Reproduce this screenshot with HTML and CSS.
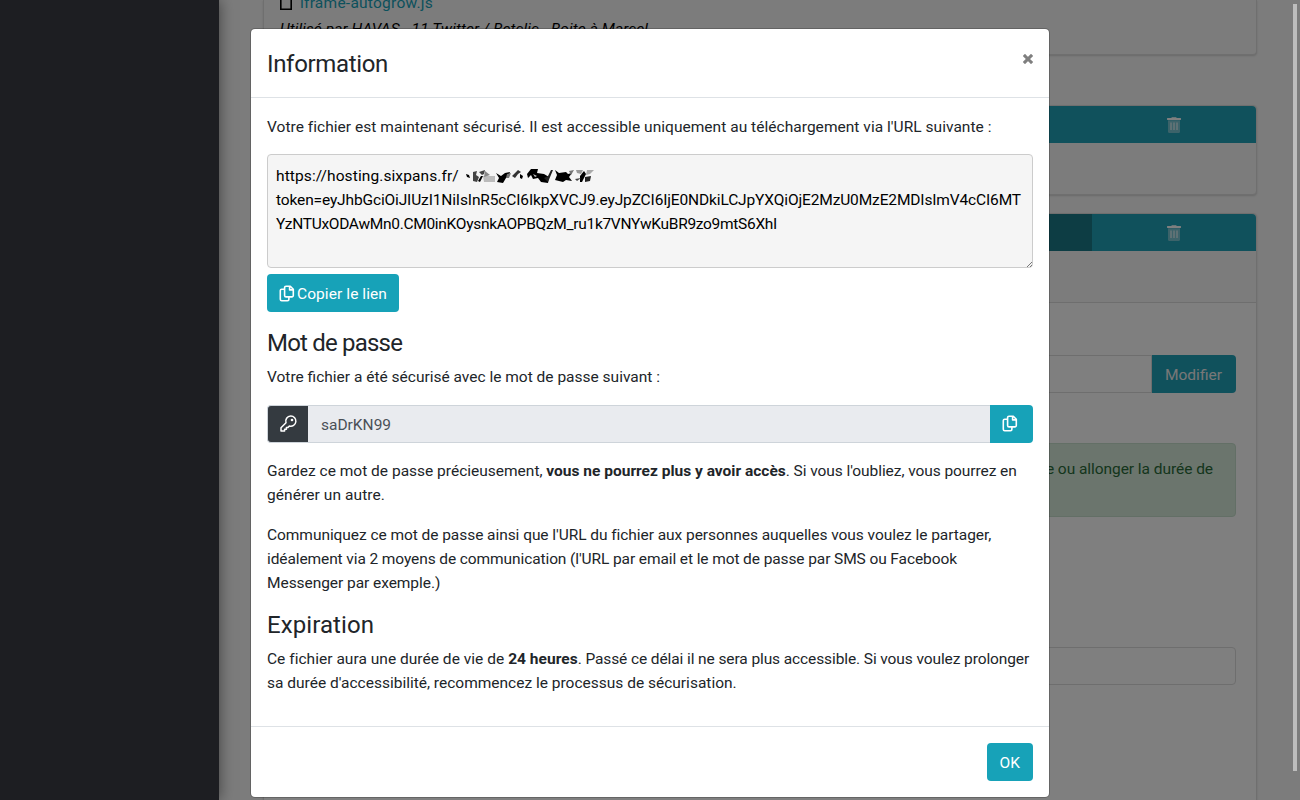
FILE: index.html
```
<!DOCTYPE html>
<html lang="fr">
<head>
<meta charset="utf-8">
<title>Information</title>
<link rel="stylesheet" href="styles.css">
</head>
<body>
<svg class="defs" width="0" height="0">
  <symbol id="copy" viewBox="0 0 16 17">
    <path d="M7 1.200h4.300l3 3v6.300a1.400 1.400 0 0 1-1.400 1.400H7a1.400 1.400 0 0 1-1.400-1.400V2.600A1.400 1.400 0 0 1 7 1.200M10.600 1.500v3.400h3.500M5.400 4.200H2.700A1.400 1.400 0 0 0 1.300 5.600v8.700a1.400 1.400 0 0 0 1.400 1.400h5.800a1.400 1.400 0 0 0 1.400-1.400v-2" fill="none" stroke="currentColor" stroke-width="1.600" stroke-linejoin="round"/>
  </symbol>
  <symbol id="trash" viewBox="0 0 14 16">
    <path d="M1 3.200h12v11.300a1.500 1.500 0 0 1-1.500 1.500h-9A1.500 1.500 0 0 1 1 14.500z" fill="currentColor" opacity=".4"/>
    <path d="M.4 1h3.800L4.900.2h4.200L9.800 1h3.800a.4.4 0 0 1 .4.4v1.200a.4.4 0 0 1-.4.4H.4a.4.4 0 0 1-.4-.4V1.400A.4.4 0 0 1 .4 1z" fill="currentColor"/>
    <path d="M4 5.500v7.500M7 5.500v7.500M10 5.500v7.500" stroke="currentColor" stroke-width="1"/>
  </symbol>
</svg>

<div class="app">
  <aside class="sidebar"></aside>
  <main class="page">
    <section class="card card-file">
      <div class="file-name">
        <svg width="12" height="16" viewBox="0 0 12 16"><path d="M.8.8h10.400v14.400H.8z" fill="none" stroke="#000" stroke-width="1.600"/></svg>
        <a>iframe-autogrow.js</a>
      </div>
      <em class="used-by">Utilisé par HAVAS - 11 Twitter / Betclic - Boite à Marcel</em>
    </section>
    <section class="card card-short">
      <div class="btn-row"><span class="seg"></span><span class="seg seg-del"><svg width="14" height="16"><use href="#trash"/></svg></span></div>
    </section>
    <section class="card card-open">
      <div class="btn-row"><span class="seg seg-active"></span><span class="seg seg-del"><svg width="14" height="16"><use href="#trash"/></svg></span></div>
      <div class="card-info"></div>
      <div class="card-body">
        <div class="group"><span class="field"></span><span class="btn btn-end">Modifier</span></div>
        <div class="alert">e ou allonger la durée de</div>
        <div class="field field-alone"></div>
      </div>
    </section>
  </main>
</div>

<div class="backdrop">
  <div class="modal">
    <header class="modal-header">
      <h4 class="title-info">Information</h4>
      <svg class="close" width="10" height="10" viewBox="0 0 10 10"><path d="M2 2l6 6M8 2l-6 6" stroke="#7f7f7f" stroke-width="3.100" stroke-linecap="square"/></svg>
    </header>
    <div class="modal-body">
      <p class="intro">Votre fichier est maintenant sécurisé. Il est accessible uniquement au téléchargement via l'URL suivante :</p>
      <div class="link-box">
        <div class="url">https://hosting.sixpans.fr/<svg class="blot" width="134" height="18" viewBox="0 0 134 18">
          <path d="M5 7l3 1 1 3-3-1z" fill="#000"/>
          <path d="M12 5l4-1-1 4 3 2-2 5-4-1z" fill="#444"/><path d="M18 5l6-2-1 4-2 1z" fill="#444"/><path d="M20 9l2 0-3 6-2-1z" fill="#000"/>
          <path d="M22 9h12v6H23z" fill="#bbb"/><path d="M24 4l5 4-6 2z" fill="#888"/>
          <path d="M35 6l5 3 4-3 5-1-1 4-3 2-3 5-6-1 2-4z" fill="#000"/><path d="M46 7l4-1-2 5h-3z" fill="#777"/>
          <path d="M51 9l6-6 3 2-3 2-3 4z" fill="#333"/><path d="M59 7l3 2-1 3-2-1z" fill="#000"/>
          <path d="M66 7l4-5 7 0-1 4 7 1 5 3-1 6-7-1-3-4-5 1-2-4-3 3z" fill="#000"/><path d="M72 7l4 2-2 1z" fill="#ccc"/><path d="M83 11l4-2 3-6 2 0-5 12z" fill="#222"/>
          <path d="M94 3l4 3 7-1 2 2 4-1-3 4 3 4-6-1-3 2-8-2 2-5z" fill="#000"/><path d="M108 4l5-1-3 5z" fill="#777"/>
          <path d="M115 3h7l-2 4-4-1z" fill="#999"/><path d="M119 9l4-5 2 3-4 8-2 0z" fill="#000"/><path d="M126 3h7l-4 4-4 1z" fill="#aaa"/><path d="M124 10l6-1-1 5-5 1z" fill="#222"/><path d="M114 12l6-1-4 3z" fill="#444"/>
        </svg></div>
        <div class="token-a">token=eyJhbGciOiJIUzI1NiIsInR5cCI6IkpXVCJ9.eyJpZCI6IjE0NDkiLCJpYXQiOjE2MzU0MzE2MDIsImV4cCI6MT</div>
        <div class="token-b">YzNTUxODAwMn0.CM0inKOysnkAOPBQzM_ru1k7VNYwKuBR9zo9mtS6XhI</div>
        <svg class="grip" width="5" height="5" viewBox="0 0 5 5"><path d="M0 5l5-5M3 5l2-2" stroke="#777" stroke-width="1"/></svg>
      </div>
      <span class="btn btn-copy"><svg width="16" height="17"><use href="#copy"/></svg>Copier le lien</span>

      <h4 class="title-pass">Mot de passe</h4>
      <p>Votre fichier a été sécurisé avec le mot de passe suivant :</p>
      <div class="group">
        <span class="key"><svg width="17" height="17" viewBox="0 0 17 17"><path d="M10.700 1a5.100 5.100 0 1 1-1.300 10L8 12.400H6.400v1.800H4.600V16H1v-3.200l5-5A5.100 5.100 0 0 1 10.700 1z" fill="none" stroke="#fff" stroke-width="1.500" stroke-linejoin="round"/><circle cx="12" cy="5" r="1.300" fill="#fff"/></svg></span>
        <span class="password">saDrKN99</span>
        <span class="btn btn-end btn-icon"><svg width="16" height="17"><use href="#copy"/></svg></span>
      </div>
      <p>Gardez ce mot de passe précieusement, <b>vous ne pourrez plus y avoir accès</b><span class="t1">. Si vous l'oubliez, vous pourrez en</span><br><span class="t2">générer un autre.</span></p>
      <p><span class="t3">Communiquez ce mot de passe ainsi que l'URL du fichier aux personnes auquelles vous voulez le partager,</span><br><span class="t4">idéalement via 2 moyens de communication (l'URL par email et le mot de passe par SMS ou Facebook</span><br><span class="t3">Messenger par exemple.)</span></p>

      <h4>Expiration</h4>
      <p><span class="t5">Ce fichier aura une durée de vie de <b>24 heures</b></span><span class="t4">. Passé ce délai il ne sera plus accessible. Si vous voulez prolonger</span><br>sa durée d'accessibilité, recommencez le processus de sécurisation.</p>
    </div>
    <footer class="modal-footer"><span class="btn">OK</span></footer>
  </div>
</div>
<div class="scroll-thumb"></div>
</body>
</html>
```
FILE: styles.css
```
* { box-sizing: border-box; }
body {
  margin: 0;
  height: 800px;
  overflow: hidden;
  background: #f8f8f8;
  color: #212529;
  font: 15.5px/24px Roboto, "Open Sans", sans-serif;
}
.defs { position: absolute; }
svg { flex: none; }

/* Page behind the dialog */
.app { display: flex; height: 800px; overflow: hidden; }
.sidebar {
  position: relative;
  z-index: 3;
  flex: none;
  width: 219px;
  background: #1d1e22;
  box-shadow: 0 0 14px rgba(0, 0, 0, .5);
}
.page { flex: 1; padding: 0 43px 0 44px; }
.card {
  display: flow-root;
  border: 1px solid #dedede;
  border-radius: 4px;
  background: #f8f8f8;
  box-shadow: 0 1px 2px rgba(0, 0, 0, .15);
}
.card-file {
  height: 55px;
  border-top: 0;
  border-radius: 0 0 4px 4px;
  margin-bottom: 50px;
  padding: 0 16px;
}
.file-name { display: flex; gap: 8px; height: 16px; margin-top: -6px; letter-spacing: .25px; color: #17a2b8; line-height: 18px; }
.used-by { display: block; margin-top: 7px; letter-spacing: .07px; color: #000; white-space: nowrap; }
.card-short { height: 90px; margin-bottom: 18px; }
.card-open { height: 640px; }
.btn-row { display: flex; height: 37px; border-radius: 4px 4px 0 0; overflow: hidden; background: #20a2b8; }
.seg { flex: 1; }
.seg-active { background: #1a7b88; }
.seg-del { flex: none; width: 164px; display: flex; justify-content: center; align-items: center; color: #fff; }
.card-info { height: 52px; border-bottom: 1px solid #dcdcdc; }
.card-body { height: 550px; padding: 52px 20px 0; background: #fff; }
.card-body .btn { color: #f0f0f0; background: #20a2b8; }
.field { flex: 1; height: 38px; border: 1px solid #dcdcdc; }
.field-alone { border-radius: 4px; }
.alert {
  height: 74px;
  margin: 50px 0 130px;
  padding: 13px 22px;
  border: 1px solid #c6dfcc;
  border-radius: 4px;
  background: #d6eadb;
  color: #2a6a39;
  text-align: right;
  letter-spacing: -.05px;
}

/* Dialog */
.backdrop {
  position: absolute;
  inset: 0;
  z-index: 2;
  display: flex;
  justify-content: center;
  align-items: flex-start;
  padding-top: 28px;
  background: rgba(0, 0, 0, .5);
}
.modal {
  width: 800px;
  height: 770px;
  border: 1px solid rgba(0, 0, 0, .2);
  border-radius: 5px;
  background: #fff;
  background-clip: padding-box;
}
.modal-header {
  display: flex;
  justify-content: space-between;
  height: 69px;
  padding: 21px 16px 0;
  border-bottom: 1px solid #dee2e6;
}
.close { margin-top: 4px; }
.modal-body { padding: 16.5px 16px 0; height: 628px; }
h4 { margin: 0 0 7.5px; font-size: 24px; font-weight: 400; line-height: 28.5px; letter-spacing: .08px; }
.title-info { letter-spacing: -.33px; }
.title-pass { letter-spacing: -.8px; }
p { margin: 0 0 16px; white-space: nowrap; }
.intro { letter-spacing: .037px; margin-bottom: 15.5px; }
.link-box {
  position: relative;
  height: 114px;
  margin-bottom: 6px;
  padding: 9px 8px;
  border: 1px solid #ccc;
  border-radius: 4px;
  background: #f5f5f5;
  color: #000;
  white-space: nowrap;
}
.url { display: flex; height: 24px; letter-spacing: .1px; }
.blot { margin: 3px 0 0 2px; }
.token-a { letter-spacing: -.136px; }
.token-b { letter-spacing: -.302px; }
.grip { position: absolute; right: 0; bottom: 0; }
.btn {
  display: inline-flex;
  align-items: center;
  height: 38px;
  padding: 1px 13px 0;
  border-radius: 4px;
  background: #17a2b8;
  color: #fff;
}
.btn-copy { display: flex; width: 132px; gap: 2px; padding: 1px 12px 0; letter-spacing: .08px; margin-bottom: 17px; }
.btn-copy svg { margin-top: -1px; }
.group { display: flex; height: 38px; margin-bottom: 16px; }
.btn-end { flex: none; width: 84px; border-radius: 0 4px 4px 0; }
.btn-icon { width: 43px; padding: 0 0 1px 12px; }
.key {
  display: flex;
  justify-content: center;
  align-items: center;
  width: 41px;
  padding-bottom: 2px;
  border: 1px solid #ced4da;
  border-right: 0;
  border-radius: 4px 0 0 4px;
  background: #343a40;
}
.password {
  flex: 1;
  padding: 7px 13px;
  border: solid #ced4da;
  border-width: 1px 0;
  background: #e9ebef;
  color: #495057;
}
.t1 { letter-spacing: -.068px; }
.t2 { letter-spacing: .085px; }
.t3 { letter-spacing: -.055px; }
.t4 { letter-spacing: -.1px; }
.t5 { letter-spacing: .03px; }
.modal-footer {
  display: flex;
  justify-content: flex-end;
  padding: 16px;
  border-top: 1px solid #dee2e6;
}

.scroll-thumb {
  position: absolute;
  z-index: 4;
  left: 1293px;
  top: 4px;
  width: 4px;
  height: 767px;
  background: #bdbdbd;
}
```
